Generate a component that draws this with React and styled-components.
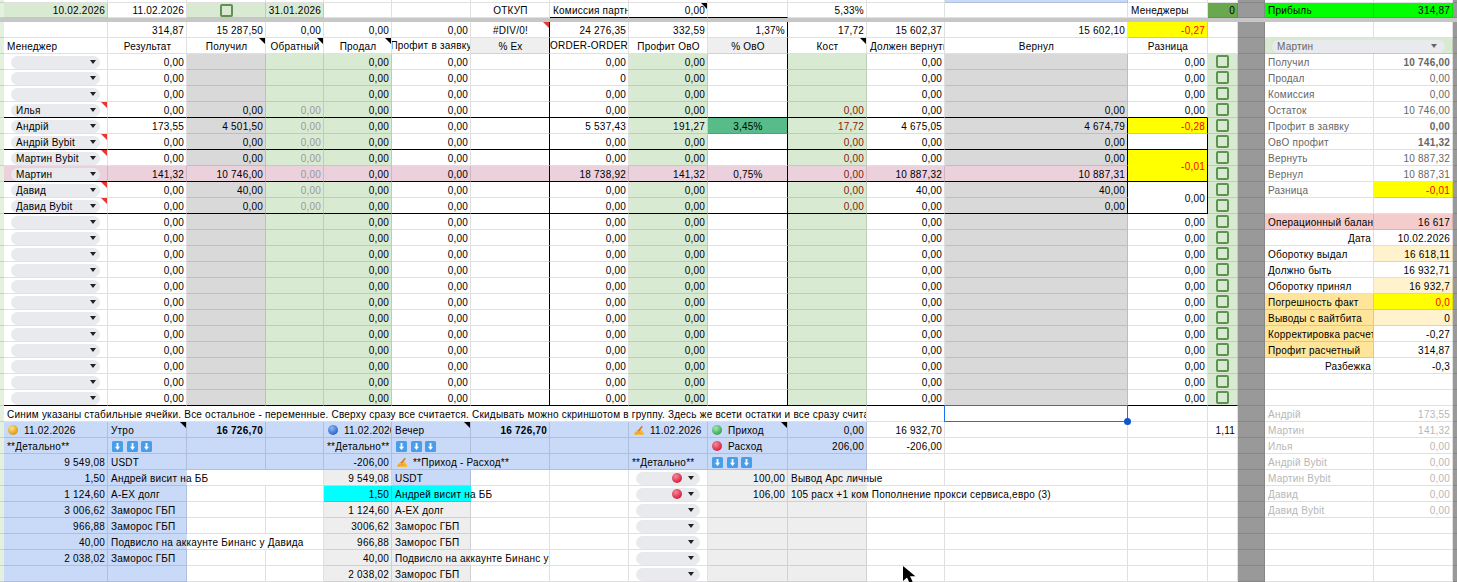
import React from 'react';
import styled, { createGlobalStyle } from 'styled-components';

const LINE = 'rgba(0, 0, 0, 0.12)';
const BLACK = '#000';
const GREEN = '#d9ead3';
const GRAY = '#d9d9d9';
const PINK = '#ead1dc';
const BLUE = '#c9daf8';
const SOFT = '#eeeeee';
const YELLOW = '#ffff00';
const CREAM = '#fff2cc';
const SAND = '#ffe599';
const SLIVER = '#e3f1de';
const STRIP = '#999999';

const GlobalStyle = createGlobalStyle`
  html, body {
    margin: 0;
    background: #fff;
    overflow: hidden;
  }
`;

const Sheet = styled.div`
  position: relative;
  display: grid;
  width: 1457px;
  height: 582px;
  overflow: hidden;
  grid-template-columns: 4px 104px 79px 79px 58px 68px 79px 79px 79px 79px 80px 79px 78px 183px 80px 30px 27px 109px 79px 4px;
  grid-template-rows: 3px 15px 4px 16px 16px repeat(33, 16px);
  font-family: "Liberation Sans", Arial, sans-serif;
  font-size: 10px;
  letter-spacing: 0.22px;
  color: #000;
`;

const Row = styled.div`
  display: contents;
`;

const TopRow = styled(Row)`
  & > * {
    padding-top: 3px;
  }
`;

const Cell = styled.div`
  position: relative;
  z-index: ${p => (p.$spill ? 1 : 0)};
  box-sizing: border-box;
  display: flex;
  align-items: center;
  justify-content: ${p => p.$align || 'flex-start'};
  min-width: 0;
  padding: 1px 2px 0 3px;
  overflow: ${p => (p.$spill ? 'visible' : 'hidden')};
  white-space: nowrap;
  background: ${p => p.$bg || '#fff'};
  color: ${p => p.$color || 'inherit'};
  font-weight: ${p => (p.$bold ? 700 : 400)};
  border-right: ${p => (p.$open ? 'none' : `1px solid ${p.$right || LINE}`)};
  border-bottom: 1px solid ${p => p.$bottom || LINE};
  grid-column: span ${p => p.$span || 1};
  grid-row: span ${p => p.$rows || 1};

  ${p => p.$corner && `
    &::after {
      content: "";
      position: absolute;
      top: 0;
      right: 0;
      border-top: 6px solid ${p.$corner};
      border-left: 6px solid transparent;
    }
  `}
`;

const ChipCell = styled(Cell)`
  padding: 0;
`;

const Separator = styled.div`
  grid-column: 1 / -1;
  background: #c7c7c7;
`;

const Selected = styled(Cell)`
  overflow: visible;
  z-index: 2;

  &::after {
    content: "";
    position: absolute;
    top: -1px;
    left: -1px;
    right: -1px;
    bottom: -1px;
    border: 1px solid #1a73e8;
  }

  &::before {
    content: "";
    position: absolute;
    z-index: 1;
    right: -4px;
    bottom: -4px;
    width: 7px;
    height: 7px;
    border-radius: 50%;
    background: #1155cc;
  }
`;

const Chip = styled.div`
  box-sizing: border-box;
  display: flex;
  align-items: center;
  flex: none;
  width: ${p => p.$width}px;
  height: 13px;
  margin: 1px auto 0;
  padding-left: ${p => p.$inset ?? 5}px;
  border-radius: 7px;
  background: #e8eaed;
  color: ${p => p.$color || '#000'};
`;

const ChipLabel = styled.span`
  flex: 1;
  display: flex;
  justify-content: ${p => (p.$end ? 'flex-end' : 'flex-start')};
  overflow: hidden;
`;

const Caret = styled.span`
  flex: none;
  width: 0;
  height: 0;
  margin: 0 ${p => p.$gap || 4}px 0 ${p => (p.$lead ? 6 : 0)}px;
  border-top: 4.5px solid ${p => p.$color || '#202124'};
  border-left: 3.5px solid transparent;
  border-right: 3.5px solid transparent;
`;

const Check = styled.span`
  box-sizing: border-box;
  flex: none;
  display: block;
  width: 13px;
  height: 13px;
  margin: 0 auto;
  border: 2px solid #5f9150;
  border-radius: 2px;
`;

const Ball = styled.span`
  flex: none;
  display: inline-block;
  width: 10px;
  height: 10px;
  margin: ${p => p.$margin || '0 6px 0 1px'};
  border-radius: 50%;
  background: radial-gradient(circle at 38% 32%, ${p => p.$light}, ${p => p.$dark} 72%);
`;

const Tiles = styled.div`
  display: flex;
  gap: 3.5px;
  padding-left: 1px;
`;

const HandWrap = styled.span`
  flex: none;
  display: inline-flex;
  margin: 0 5px 0 1px;
`;

const Cursor = styled.svg`
  position: absolute;
  left: 903px;
  top: 566px;
  z-index: 3;
`;

const ArrowTile = () => (
  <svg width="11" height="11" viewBox="0 0 11 11">
    <rect width="11" height="11" rx="1.5" fill="#4a9de8" />
    <path d="M4.6 2h1.8v3.8H8L5.5 9 3 5.8h1.6z" fill="#fff" />
  </svg>
);

const ArrowRow = () => (
  <Tiles>
    <ArrowTile />
    <ArrowTile />
    <ArrowTile />
  </Tiles>
);

const Hand = () => (
  <HandWrap>
    <svg width="12" height="11" viewBox="0 0 12 11">
      <path d="M1 9.5c.3-2 1.6-3.4 3.2-4.2L8 3.8l1.4 2 1.6 1.6V10H2z" fill="#f5bb45" />
      <path d="M4.4 6 8.6.8l1.2 1L6 6.8z" fill="#d9762b" />
      <path d="M2 8.6c2-.9 4-.9 6.5-.3" stroke="#e08a2e" strokeWidth="0.8" fill="none" />
    </svg>
  </HandWrap>
);

const balls = {
  yellow: { $light: '#ffe27a', $dark: '#d99a1c' },
  blue: { $light: '#8fb8f2', $dark: '#2f66c9' },
  green: { $light: '#a5e6b4', $dark: '#34a853' },
  red: { $light: '#f58a98', $dark: '#d92140' },
};

const RIGHT = 'flex-end';
const CENTER = 'center';

const zero = '0,00';

const managers = [
  {},
  { order: '0' },
  {},
  { name: 'Илья', flag: true, got: zero, back: zero, cost: zero, ret: zero },
  { name: 'Андрій', result: '173,55', got: '4 501,50', back: zero, order: '5 537,43', ovo: '191,27', pct: '3,45%', cost: '17,72', owe: '4 675,05', ret: '4 674,79' },
  { name: 'Андрій Bybit', flag: true, got: zero, back: zero, cost: zero, ret: zero },
  { name: 'Мартин Bybit', flag: true, got: zero, back: zero, cost: zero, ret: zero },
  { name: 'Мартин', pink: true, result: '141,32', got: '10 746,00', back: zero, order: '18 738,92', ovo: '141,32', pct: '0,75%', cost: zero, owe: '10 887,32', ret: '10 887,31' },
  { name: 'Давид', flag: true, got: '40,00', back: zero, cost: zero, owe: '40,00', ret: '40,00' },
  { name: 'Давид Bybit', flag: true, got: zero, back: zero, cost: zero, ret: zero },
  ...Array.from({ length: 12 }, () => ({})),
];

// rows closed by a black rule
const ruled = [3, 5, 7, 9, 21];

// right hand panel, one entry per sheet row from the first manager down
const panel = [
  { label: 'Получил', value: '10 746,00', bold: true, color: '#666' },
  { label: 'Продал', value: zero, color: '#666' },
  { label: 'Комиссия', value: zero, color: '#666' },
  { label: 'Остаток', value: '10 746,00', color: '#666' },
  { label: 'Профит в заявку', value: zero, bold: true, color: '#666' },
  { label: 'ОвО профит', value: '141,32', bold: true, color: '#666' },
  { label: 'Вернуть', value: '10 887,32', color: '#666' },
  { label: 'Вернул', value: '10 887,31', color: '#666' },
  { label: 'Разница', value: '-0,01', color: '#666', valueBg: YELLOW, valueColor: '#f00' },
  {},
  { label: 'Операционный балан', value: '16 617', bg: '#f4cccc', valueBg: '#f4cccc' },
  { label: 'Дата', value: '10.02.2026', alignLabel: RIGHT },
  { label: 'Оборотку выдал', value: '16 618,11', valueBg: CREAM },
  { label: 'Должно быть', value: '16 932,71' },
  { label: 'Оборотку принял', value: '16 932,7', valueBg: CREAM },
  { label: 'Погрешность факт', value: '0,0', bg: SAND, valueBg: YELLOW, valueColor: '#f00' },
  { label: 'Выводы с вайтбита', value: '0', bg: SAND, valueBg: CREAM },
  { label: 'Корректировка расчет', value: '-0,27', bg: SAND },
  { label: 'Профит расчетный', value: '314,87', bg: SAND },
  { label: 'Разбежка', value: '-0,3', alignLabel: RIGHT },
  {},
  {},
  { label: 'Андрій', value: '173,55', color: '#b7b7b7' },
  { label: 'Мартин', value: '141,32', color: '#b7b7b7' },
  { label: 'Илья', value: zero, color: '#b7b7b7' },
  { label: 'Андрій Bybit', value: zero, color: '#b7b7b7' },
  { label: 'Мартин Bybit', value: zero, color: '#b7b7b7' },
  { label: 'Давид', value: zero, color: '#b7b7b7' },
  { label: 'Давид Bybit', value: zero, color: '#b7b7b7' },
  {},
  {},
  {},
  {},
];

const PanelCells = ({ row }) => {
  const item = panel[row] || {};
  return (
    <>
      <Cell $bg={STRIP} />
      <Cell $bg={item.bg} $color={item.color} $align={item.alignLabel}>{item.label}</Cell>
      <Cell $bg={item.valueBg} $color={item.valueColor || item.color} $align={RIGHT} $bold={item.bold}>{item.value}</Cell>
      <Cell $bg={STRIP} />
    </>
  );
};

const ManagerRow = ({ m, i }) => {
  const bottom = ruled.includes(i) ? BLACK : undefined;
  const tint = fill => (m.pink ? PINK : fill);
  const boxed = i >= 4 && i <= 9;
  return (
    <Row>
      <Cell $bg={SLIVER} />
      <ChipCell $bg={tint()} $bottom={bottom} $corner={m.flag ? '#e53935' : undefined}>
        <Chip $width={89}>
          <ChipLabel>{m.name}</ChipLabel>
          <Caret />
        </Chip>
      </ChipCell>
      <Cell $bg={tint()} $bottom={bottom} $align={RIGHT}>{m.result || zero}</Cell>
      <Cell $bg={tint(GRAY)} $bottom={bottom} $align={RIGHT}>{m.got}</Cell>
      <Cell $bg={tint(GREEN)} $bottom={bottom} $align={RIGHT} $color="#999">{m.back}</Cell>
      <Cell $bg={tint(GREEN)} $bottom={bottom} $align={RIGHT}>{zero}</Cell>
      <Cell $bg={tint()} $bottom={bottom} $align={RIGHT}>{zero}</Cell>
      <Cell $bg={tint()} $bottom={bottom} $right={BLACK} />
      <Cell $bg={tint()} $bottom={bottom} $align={RIGHT}>{m.order || zero}</Cell>
      <Cell $bg={tint(GREEN)} $bottom={bottom} $align={RIGHT}>{m.ovo || zero}</Cell>
      <Cell $bg={m.name === 'Андрій' ? '#57bb8a' : tint()} $bottom={bottom} $right={BLACK} $align={CENTER}>{m.pct}</Cell>
      <Cell $bg={tint(GREEN)} $bottom={bottom} $align={RIGHT} $color="#85200c">{m.cost}</Cell>
      <Cell $bg={tint()} $bottom={bottom} $align={RIGHT}>{m.owe || zero}</Cell>
      <Cell $bg={tint(GRAY)} $bottom={bottom} $right={boxed ? BLACK : undefined} $align={RIGHT}>{m.ret}</Cell>
      {i === 4 && <Cell $bg={YELLOW} $color="#f00" $right={BLACK} $align={RIGHT}>-0,28</Cell>}
      {i === 5 && <Cell $bottom={BLACK} $right={BLACK} />}
      {i === 6 && <Cell $rows={2} $bg={YELLOW} $color="#f00" $bottom={BLACK} $right={BLACK} $align={RIGHT}>-0,01</Cell>}
      {i === 8 && <Cell $rows={2} $bottom={BLACK} $right={BLACK} $align={RIGHT}>{zero}</Cell>}
      {!boxed && <Cell $bottom={bottom} $align={RIGHT}>{zero}</Cell>}
      <ChipCell $bg={GREEN} $bottom={i === 21 ? BLACK : undefined}><Check /></ChipCell>
      <PanelCells row={i} />
    </Row>
  );
};

const tail = (
  <>
    <Cell />
    <Cell />
  </>
);

const Paper = ({ children }) => <Cell $bg={BLUE}>{children}</Cell>;
const PaperNum = ({ children, bold }) => <Cell $bg={BLUE} $align={RIGHT} $bold={bold}>{children}</Cell>;

const DropChip = ({ marked }) => (
  <ChipCell>
    <Chip $width={64} $inset={0}>
      <ChipLabel $end>{marked && <Ball {...balls.red} $margin="0" />}</ChipLabel>
      <Caret $lead $gap={6} />
    </Chip>
  </ChipCell>
);

const DetailCells = ({ marked, amount, title, spill }) => (
  <>
    <DropChip marked={marked} />
    <Cell $bg={SOFT} $align={RIGHT}>{amount}</Cell>
    <Cell $bg={SOFT} $spill={spill} $open={spill}>{title}</Cell>
    <Cell $open={spill === 'long'} />
    <Cell />
    <Cell />
    <Cell />
  </>
);

// lower ledger rows: morning and evening blocks plus the expense list
const ledger = [
  { a: '1,50', b: 'Андрей висит на ББ', e: '9 549,08', f: 'USDT', fBg: BLUE, marked: true, amount: '100,00', title: 'Вывод Арс личные', spillA: true },
  { a: '1 124,60', b: 'A-EX долг', e: '1,50', eBg: '#00ffff', f: 'Андрей висит на ББ', fBg: '#00ffff', fSpill: true, marked: true, amount: '106,00', title: '105 расх +1 ком Пополнение прокси сервиса,евро (3)', long: true },
  { a: '3 006,62', b: 'Заморос ГБП', e: '1 124,60', f: 'A-EX долг' },
  { a: '966,88', b: 'Заморос ГБП', e: '3006,62', f: 'Заморос ГБП' },
  { a: '40,00', b: 'Подвисло на аккаунте Бинанс у Давида', e: '966,88', f: 'Заморос ГБП', spillA: true },
  { a: '2 038,02', b: 'Заморос ГБП', e: '40,00', f: 'Подвисло на аккаунте Бинанс у', fSpill: true },
  { e: '2 038,02', f: 'Заморос ГБП' },
];

const LedgerRow = ({ r, row }) => (
  <Row>
    <Cell $bg={SLIVER} />
    <Cell $bg={BLUE} $align={RIGHT}>{r.a}</Cell>
    <Cell $bg={BLUE} $spill={r.spillA} $open={r.spillA}>{r.b}</Cell>
    <Cell $open={r.spillA} />
    <Cell />
    <Cell $bg={r.eBg || SOFT} $align={RIGHT}>{r.e}</Cell>
    <Cell $bg={r.fBg || SOFT} $spill={r.fSpill} $open={r.fSpill}>{r.f}</Cell>
    <Cell />
    <Cell />
    <DetailCells marked={r.marked} amount={r.amount} title={r.title} spill={r.long ? 'long' : !!r.title} />
    <PanelCells row={row} />
  </Row>
);

const App = () => (
  <>
    <GlobalStyle />
    <Sheet>
      <Row>
        {Array.from({ length: 20 }, (_, i) => (
          <Cell key={i} $bg={i === 13 ? BLUE : i === 0 ? SLIVER : i === 16 || i === 19 ? STRIP : undefined} />
        ))}
      </Row>

      <TopRow>
        <Cell $bg={SLIVER} />
        <Cell $bg={GREEN} $align={RIGHT}>10.02.2026</Cell>
        <Cell $align={RIGHT}>11.02.2026</Cell>
        <ChipCell $bg={GREEN}><Check /></ChipCell>
        <Cell $bg={GREEN} $align={RIGHT}>31.01.2026</Cell>
        <Cell />
        <Cell />
        <Cell $align={CENTER}>ОТКУП</Cell>
        <Cell $bottom={BLACK}>Комиссия партн</Cell>
        <Cell $bottom={BLACK} $align={RIGHT} $corner={BLACK}>{zero}</Cell>
        <Cell $bottom={BLACK} />
        <Cell $align={RIGHT}>5,33%</Cell>
        <Cell />
        <Cell />
        <Cell>Менеджеры</Cell>
        <Cell $bg="#6aa84f" $align={RIGHT}>0</Cell>
        <Cell $bg={STRIP} />
        <Cell $bg="#00ff00">Прибыль</Cell>
        <Cell $bg="#00ff00" $align={RIGHT}>314,87</Cell>
        <Cell $bg={STRIP} />
      </TopRow>

      <Separator />

      <Row>
        <Cell $bg={SLIVER} />
        <Cell />
        <Cell $align={RIGHT}>314,87</Cell>
        <Cell $align={RIGHT}>15 287,50</Cell>
        <Cell $align={RIGHT}>{zero}</Cell>
        <Cell $align={RIGHT}>{zero}</Cell>
        <Cell $align={RIGHT}>{zero}</Cell>
        <Cell $align={CENTER} $right={BLACK} $corner="#e53935">#DIV/0!</Cell>
        <Cell $align={RIGHT}>24 276,35</Cell>
        <Cell $align={RIGHT}>332,59</Cell>
        <Cell $align={RIGHT} $right={BLACK}>1,37%</Cell>
        <Cell $align={RIGHT}>17,72</Cell>
        <Cell $align={RIGHT}>15 602,37</Cell>
        <Cell $align={RIGHT}>15 602,10</Cell>
        <Cell $bg={YELLOW} $color="#f00" $align={RIGHT}>-0,27</Cell>
        <Cell />
        <Cell $bg={STRIP} />
        <Cell />
        <Cell />
        <Cell $bg={STRIP} />
      </Row>

      <Row>
        <Cell $bg={SLIVER} />
        <Cell>Менеджер</Cell>
        <Cell $align={CENTER}>Результат</Cell>
        <Cell $align={CENTER} $corner={BLACK}>Получил</Cell>
        <Cell $align={CENTER} $corner={BLACK}>Обратный</Cell>
        <Cell $align={CENTER} $corner={BLACK}>Продал</Cell>
        <ChipCell $align={CENTER}>Профит в заявку</ChipCell>
        <Cell $bg="#efefef" $align={CENTER} $right={BLACK}>% Ex</Cell>
        <ChipCell $align={CENTER}>ORDER-ORDER</ChipCell>
        <Cell $align={CENTER}>Профит ОвО</Cell>
        <Cell $bg="#efefef" $align={CENTER} $right={BLACK}>% ОвО</Cell>
        <Cell $align={CENTER} $corner={BLACK}>Кост</Cell>
        <Cell>Должен вернуть</Cell>
        <Cell $align={CENTER}>Вернул</Cell>
        <Cell $align={CENTER}>Разница</Cell>
        <Cell />
        <Cell $bg={STRIP} />
        <ChipCell $span={2} $bg={GREEN}>
          <Chip $width={173} $color="#666">
            <ChipLabel>Мартин</ChipLabel>
            <Caret $color="#666" $gap={8} />
          </Chip>
        </ChipCell>
        <Cell $bg={STRIP} />
      </Row>

      {managers.map((m, i) => <ManagerRow key={i} m={m} i={i} />)}

      <Row>
        <Cell $bg={SLIVER} />
        <Cell $span={11}>
          Синим указаны стабильные ячейки. Все остальное - переменные. Сверху сразу все считается. Скидывать можно скриншотом в группу. Здесь же всети остатки и все сразу считается
        </Cell>
        <Cell />
        <Selected />
        {tail}
        <PanelCells row={22} />
      </Row>

      <Row>
        <Cell $bg={SLIVER} />
        <Paper><Ball {...balls.yellow} />11.02.2026</Paper>
        <Cell $bg={BLUE} $corner={BLACK}>Утро</Cell>
        <PaperNum bold>16 726,70</PaperNum>
        <Paper />
        <Paper><Ball {...balls.blue} />11.02.2026</Paper>
        <Cell $bg={BLUE} $corner={BLACK}>Вечер</Cell>
        <PaperNum bold>16 726,70</PaperNum>
        <Paper />
        <Paper><Hand />11.02.2026</Paper>
        <Cell $bg={BLUE} $corner={BLACK}><Ball {...balls.green} />Приход</Cell>
        <PaperNum>{zero}</PaperNum>
        <Cell $align={RIGHT}>16 932,70</Cell>
        {tail}
        <Cell $align={RIGHT}>1,11</Cell>
        <PanelCells row={23} />
      </Row>

      <Row>
        <Cell $bg={SLIVER} />
        <Paper>**Детально**</Paper>
        <Paper><ArrowRow /></Paper>
        <Paper />
        <Paper />
        <Paper>**Детально**</Paper>
        <Paper><ArrowRow /></Paper>
        <Paper />
        <Paper />
        <Paper />
        <Paper><Ball {...balls.red} />Расход</Paper>
        <PaperNum>206,00</PaperNum>
        <Cell $align={RIGHT}>-206,00</Cell>
        {tail}
        <Cell />
        <PanelCells row={24} />
      </Row>

      <Row>
        <Cell $bg={SLIVER} />
        <PaperNum>9 549,08</PaperNum>
        <Paper>USDT</Paper>
        <Paper />
        <Paper />
        <PaperNum>-206,00</PaperNum>
        <Cell $bg={BLUE} $span={2}><Hand />**Приход - Расход**</Cell>
        <Paper />
        <Paper>**Детально**</Paper>
        <Paper><ArrowRow /></Paper>
        <Paper />
        <Cell />
        {tail}
        <Cell />
        <PanelCells row={25} />
      </Row>

      {ledger.map((r, i) => <LedgerRow key={i} r={r} row={26 + i} />)}

      <Cursor width="15" height="17" viewBox="0 0 15 17">
        <path d="M0 0v15l4-3.6L6.6 17l3-1.4L7 10.2h5.4z" fill="#000" />
      </Cursor>
    </Sheet>
  </>
);

export default App;
